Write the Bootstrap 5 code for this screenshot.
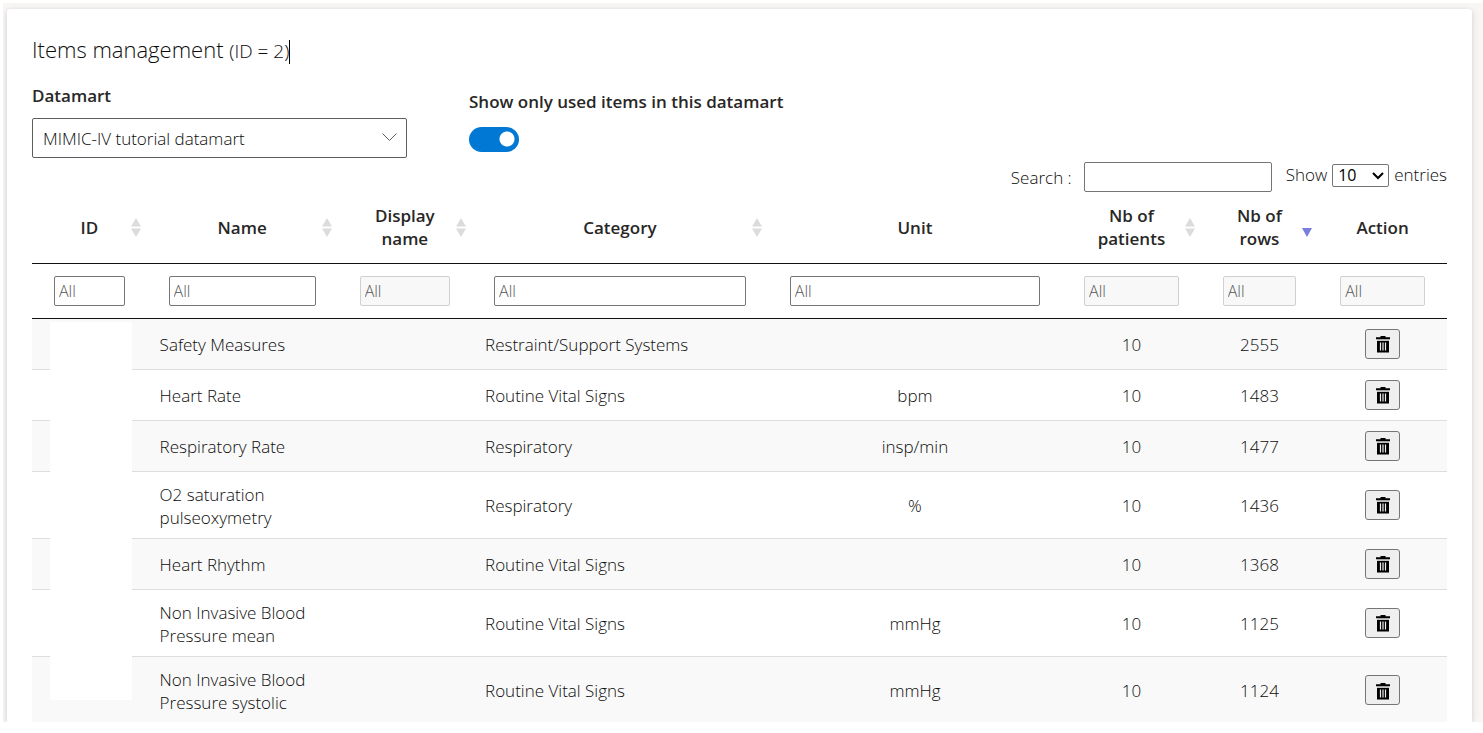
<!DOCTYPE html>
<html lang="en">
<head>
<meta charset="utf-8">
<meta name="viewport" content="width=device-width, initial-scale=1">
<title>Items management</title>
<link href="https://cdn.jsdelivr.net/npm/bootstrap@5.3.0/dist/css/bootstrap.min.css" rel="stylesheet">
<style>
body { font-family: "Open Sans", "Noto Sans", sans-serif; font-size: 17px; font-weight: 300; line-height: 23px; color: #0c0c0c; background: #fff; }
.page-shell { margin: 3px 0 0 3px; padding: 6px 11px 0 4px; background: #f8f7f6; overflow: hidden; }
.panel { background: #fff; border-radius: 3px 3px 0 0; padding: 25px 25px 0; box-shadow: 0 2px 8px rgba(0,0,0,.13), 0 0 3px rgba(0,0,0,.06); }
.panel-title { font-size: 22px; line-height: 30px; font-weight: 300; margin: 0; }
.panel-title span { font-size: 19px; }
.caret-bar { display: inline-block; width: 1px; height: 24px; background: #000; vertical-align: middle; }
.filters { gap: 62px; margin-top: 18px; }
.filters label { font-weight: 600; color: #282726; }
.datamart { width: 375px; }
.datamart select { height: 40px; margin-top: 11px; padding: 0 10px; border: 1px solid #605e5c; border-radius: 2px; appearance: none; background: #fff; color: inherit; font-weight: 300; }
.datamart svg { position: absolute; right: 10px; bottom: 16px; pointer-events: none; }
.used-only { padding-top: 6px; }
.used-only input { appearance: none; display: block; width: 50px; height: 25px; margin-top: 14px; border-radius: 13px; background: radial-gradient(circle at 38px 12px, #fff 7px, #0078d4 8px); }
.tools { gap: 14px; margin-top: 4px; }
.tools > div { gap: 12px; }
.box { border: 1px solid #767676; border-radius: 2px; padding: 0 4px; height: 30px; font-weight: 300; }
.tools .box { width: 188px; }
.length { padding-top: 2px; gap: 5px; line-height: 21px; }
.length select { appearance: none; width: 57px; height: 23px; line-height: 21px; padding: 0 5px; border: 1px solid #767676; border-radius: 2px; background: #fff; color: #000; font-size: 16px; font-weight: 400; }
.length svg { position: absolute; right: 5px; top: 8px; pointer-events: none; }
.items { width: 100%; table-layout: fixed; text-align: center; }
.items th { font-weight: 600; vertical-align: middle; color: #282726; }
.items .heads th { height: 71px; padding: 0 30px; border-bottom: 1px solid #111; position: relative; }
.items .heads th.tight { padding: 0 20px; }
.items .filter-row td { height: 55px; padding: 0 22px; border-bottom: 1px solid #111; }
.filter-row .box { width: 100%; display: block; font-size: 16px; }
.filter-row .box::placeholder { color: #555; }
.filter-row .box:disabled { background: #f8f8f8; border-color: #d0d0d0; }
.sorter { position: absolute; right: 6px; top: 26px; }
.items tbody td { padding: 11px 13px 9px; border-bottom: 1px solid #ddd; }
.items tbody td:last-child { padding: 10px 13px; }
.items tbody tr:nth-child(odd) { background: #f9f9f9; }
.items tbody tr:last-child td { border: 0; padding-bottom: 8px; }
.items tbody td.start { text-align: left; }
.del { display: block; width: 35px; height: 30px; margin: 0 auto; padding: 0; border: 1px solid #767676; border-radius: 3px; background: #efefef; }
.del svg { display: block; margin: 1px auto 0; }
.id-cover { position: absolute; left: 18px; width: 82px; top: 130px; bottom: 22px; background: #fff; }
.c-id { width: 8.1%; } .c-name { width: 13.5%; } .c-disp { width: 9.5%; } .c-cat { width: 20.9%; }
.c-unit { width: 20.8%; } .c-pat { width: 9.8%; } .c-rows { width: 8.3%; } .c-act { width: 9.1%; }
</style>
</head>
<body>
<svg width="0" height="0" class="position-absolute" aria-hidden="true">
  <symbol id="trash" viewBox="0 0 16 18"><path d="M5.500 1h5v1.200h4.500v2h-14v-2h4.500z M2 6h12v11.500h-12z" fill="#000"/><path d="M2 5h12" stroke="#999"/><path d="M5.500 7.500v8M8 7.500v8M10.500 7.500v8" stroke="#efefef" stroke-width="1.200"/></symbol>
  <symbol id="both" viewBox="0 0 10 19"><path d="M5 0l5 8.500h-10zM0 10.500h10l-5 8.500z" fill="#dcdcdc"/></symbol>
  <symbol id="down" viewBox="0 0 10 19"><path d="M0 10h10l-5 9z" fill="#797fdd"/></symbol>
</svg>
<main class="page-shell">
  <section class="panel">
    <h1 class="panel-title">Items management <span>(ID = 2)</span><i class="caret-bar"></i></h1>
    <div class="filters d-flex align-items-start">
      <div class="datamart position-relative">
        <label class="d-block" for="datamart">Datamart</label>
        <select id="datamart" class="w-100 d-block"><option>MIMIC-IV tutorial datamart</option></select>
        <svg width="15" height="9" viewBox="0 0 15 9" fill="none" stroke="#605e5c"><path d="M.5 .5l7 7 7-7"/></svg>
      </div>
      <div class="used-only">
        <label class="d-block" for="used">Show only used items in this datamart</label>
        <input id="used" type="checkbox" role="switch" checked>
      </div>
    </div>
    <div class="tools d-flex justify-content-end align-items-start">
      <div class="d-flex align-items-center"><label for="search">Search :</label><input id="search" class="box" type="text"></div>
      <label class="length d-flex">Show <span class="position-relative"><select class="d-block"><option>10</option></select><svg width="12" height="8" viewBox="0 0 12 8" fill="none" stroke="#000" stroke-width="2"><path d="M1 1l5 5 5-5"/></svg></span> entries</label>
    </div>
    <div class="position-relative">
      <table class="items">
        <colgroup><col class="c-id"><col class="c-name"><col class="c-disp"><col class="c-cat"><col class="c-unit"><col class="c-pat"><col class="c-rows"><col class="c-act"></colgroup>
        <thead>
          <tr class="heads">
            <th>ID<svg class="sorter" width="10" height="19"><use href="#both"/></svg></th>
            <th>Name<svg class="sorter" width="10" height="19"><use href="#both"/></svg></th>
            <th>Display name<svg class="sorter" width="10" height="19"><use href="#both"/></svg></th>
            <th>Category<svg class="sorter" width="10" height="19"><use href="#both"/></svg></th>
            <th>Unit</th>
            <th>Nb of patients<svg class="sorter" width="10" height="19"><use href="#both"/></svg></th>
            <th>Nb of rows<svg class="sorter" width="10" height="19"><use href="#down"/></svg></th>
            <th class="tight">Action</th>
          </tr>
          <tr class="filter-row">
            <td><input class="box" placeholder="All" aria-label="Filter ID"></td>
            <td><input class="box" placeholder="All" aria-label="Filter name"></td>
            <td><input class="box" placeholder="All" aria-label="Filter display name" disabled></td>
            <td><input class="box" placeholder="All" aria-label="Filter category"></td>
            <td><input class="box" placeholder="All" aria-label="Filter unit"></td>
            <td><input class="box" placeholder="All" aria-label="Filter patients" disabled></td>
            <td><input class="box" placeholder="All" aria-label="Filter rows" disabled></td>
            <td><input class="box" placeholder="All" aria-label="Filter action" disabled></td>
          </tr>
        </thead>
        <tbody>
          <tr><td></td><td class="start">Safety Measures</td><td></td><td class="start">Restraint/Support Systems</td><td></td><td>10</td><td>2555</td><td><button class="del" aria-label="Delete"><svg width="16" height="18"><use href="#trash"/></svg></button></td></tr>
          <tr><td></td><td class="start">Heart Rate</td><td></td><td class="start">Routine Vital Signs</td><td>bpm</td><td>10</td><td>1483</td><td><button class="del" aria-label="Delete"><svg width="16" height="18"><use href="#trash"/></svg></button></td></tr>
          <tr><td></td><td class="start">Respiratory Rate</td><td></td><td class="start">Respiratory</td><td>insp/min</td><td>10</td><td>1477</td><td><button class="del" aria-label="Delete"><svg width="16" height="18"><use href="#trash"/></svg></button></td></tr>
          <tr><td></td><td class="start">O2 saturation pulseoxymetry</td><td></td><td class="start">Respiratory</td><td>%</td><td>10</td><td>1436</td><td><button class="del" aria-label="Delete"><svg width="16" height="18"><use href="#trash"/></svg></button></td></tr>
          <tr><td></td><td class="start">Heart Rhythm</td><td></td><td class="start">Routine Vital Signs</td><td></td><td>10</td><td>1368</td><td><button class="del" aria-label="Delete"><svg width="16" height="18"><use href="#trash"/></svg></button></td></tr>
          <tr><td></td><td class="start">Non Invasive Blood Pressure mean</td><td></td><td class="start">Routine Vital Signs</td><td>mmHg</td><td>10</td><td>1125</td><td><button class="del" aria-label="Delete"><svg width="16" height="18"><use href="#trash"/></svg></button></td></tr>
          <tr><td></td><td class="start">Non Invasive Blood Pressure systolic</td><td></td><td class="start">Routine Vital Signs</td><td>mmHg</td><td>10</td><td>1124</td><td><button class="del" aria-label="Delete"><svg width="16" height="18"><use href="#trash"/></svg></button></td></tr>
        </tbody>
      </table>
      <div class="id-cover"></div>
    </div>
  </section>
</main>
<script src="https://cdn.jsdelivr.net/npm/bootstrap@5.3.0/dist/js/bootstrap.bundle.min.js"></script>
</body>
</html>
